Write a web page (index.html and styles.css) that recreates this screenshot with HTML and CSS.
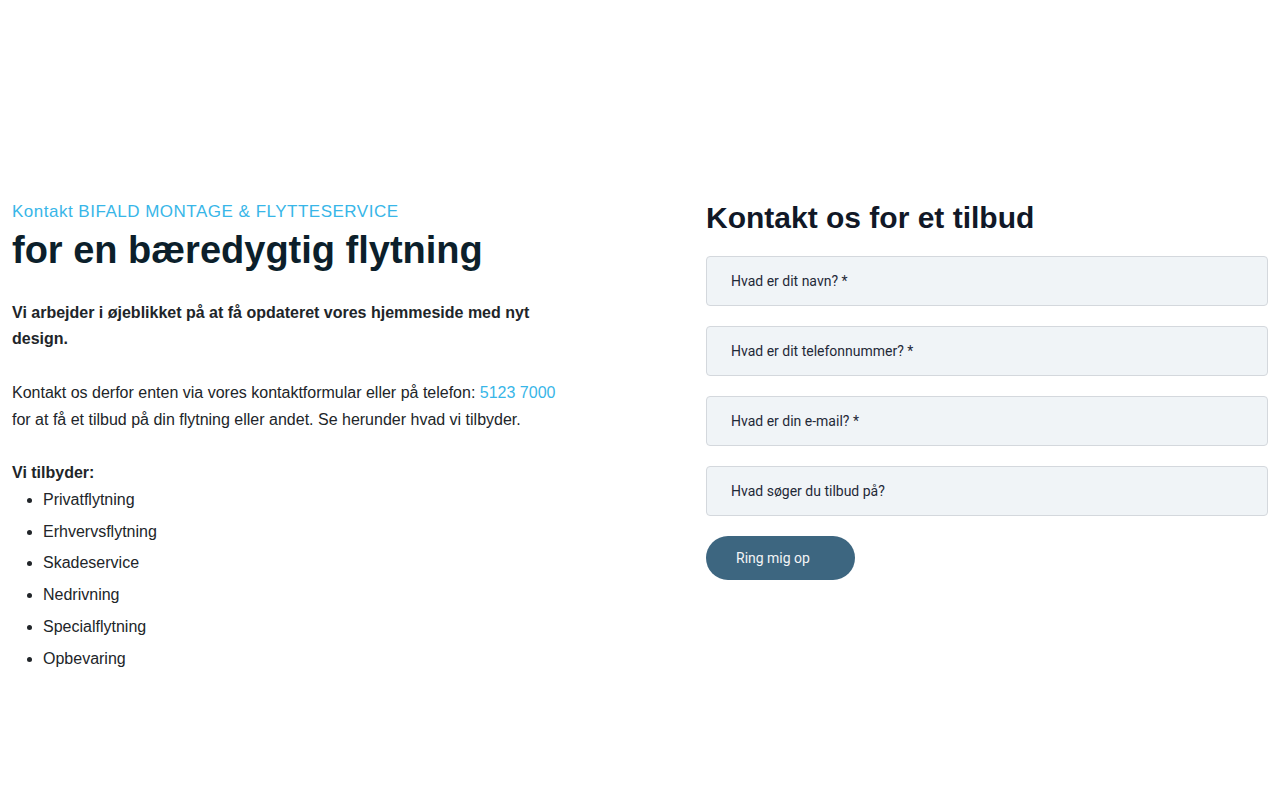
FILE: index.html
```html
<!DOCTYPE html>
<html lang="da">
<head>
<meta charset="utf-8">
<title>Kontakt</title>
<link rel="stylesheet" href="styles.css">
</head>
<body>
<main class="page">
  <section class="intro">
    <p class="eyebrow">Kontakt BIFALD MONTAGE &amp; FLYTTESERVICE</p>
    <h1 class="title">for en bæredygtig flytning</h1>
    <p class="lead">Vi arbejder i øjeblikket på at få opdateret vores hjemmeside med nyt design.</p>
    <p class="text">Kontakt os derfor enten via vores kontaktformular eller på telefon: <a class="phone" href="#">5123 7000</a> for at få et tilbud på din flytning eller andet. Se herunder hvad vi tilbyder.</p>
    <p class="list-title">Vi tilbyder:</p>
    <ul class="services">
      <li>Privatflytning</li>
      <li>Erhvervsflytning</li>
      <li>Skadeservice</li>
      <li>Nedrivning</li>
      <li>Specialflytning</li>
      <li>Opbevaring</li>
    </ul>
  </section>
  <section class="contact">
    <h2 class="contact-title">Kontakt os for et tilbud</h2>
    <form class="form">
      <input class="field" type="text" placeholder="Hvad er dit navn? *">
      <input class="field" type="tel" placeholder="Hvad er dit telefonnummer? *">
      <input class="field" type="email" placeholder="Hvad er din e-mail? *">
      <input class="field" type="text" placeholder="Hvad søger du tilbud på?">
      <button class="btn" type="button">Ring mig op</button>
    </form>
  </section>
</main>
</body>
</html>
```
FILE: styles.css
```css
* { box-sizing: border-box; }
html, body { margin: 0; padding: 0; background: #fff; }
body {
  font-family: "Liberation Sans", Arial, sans-serif;
  color: #212529;
  font-size: 16px;
}
.page {
  display: grid;
  grid-template-columns: 562px 562px;
  column-gap: 132px;
  padding: 200px 12px 0;
}
.eyebrow {
  margin: 0;
  font-size: 17px;
  line-height: 24px;
  color: #38b6e8;
  letter-spacing: 0.5px;
}
.title {
  margin: 4px 0 0;
  font-size: 38px;
  line-height: 44px;
  font-weight: 700;
  color: #0c1f2b;
}
.lead {
  margin: 28px 0 0;
  font-weight: 700;
  line-height: 26.4px;
}
.text {
  margin: 26px 0 0;
  line-height: 27px;
}
.phone { color: #38b6e8; text-decoration: none; }
.list-title {
  margin: 27px 0 0;
  font-weight: 700;
  line-height: 26px;
}
.services {
  margin: 1px 0 0;
  padding-left: 31px;
}
.services li { line-height: 26px; }
.services li + li { margin-top: 5.8px; }
.contact-title {
  margin: -1px 0 0;
  font-size: 30px;
  line-height: 38px;
  font-weight: 700;
  color: #111827;
}
.form {
  display: flex;
  flex-direction: column;
  align-items: flex-start;
  gap: 20px;
  margin-top: 19px;
}
.field {
  width: 100%;
  height: 50px;
  padding: 0 24px;
  background: #f0f4f7;
  border: 1px solid #d4d8dd;
  border-radius: 4px;
  font-family: Roboto, "Liberation Sans", sans-serif;
  font-size: 14px;
  color: #1f2937;
}
.field::placeholder { color: #1f2937; opacity: 1; }
.btn {
  width: 149px;
  height: 44px;
  padding: 0 30px;
  text-align: left;
  border: 0;
  border-radius: 22px;
  background: #3d6680;
  color: #f3f4f6;
  font-family: Roboto, "Liberation Sans", sans-serif;
  font-size: 14px;
  cursor: pointer;
}
```
